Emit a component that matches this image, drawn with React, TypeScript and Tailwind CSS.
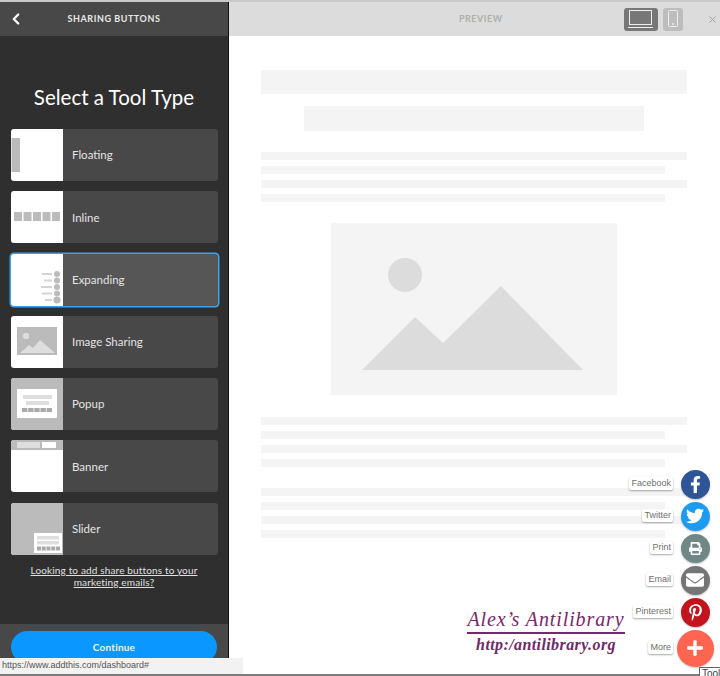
import { ChevronLeft, X } from 'lucide-react';
import { FaEnvelope, FaFacebookF, FaPinterestP, FaPlus, FaPrint, FaTwitter } from 'react-icons/fa';
import type { ReactNode } from 'react';

const GRAY = '#bbbbbb';
const LIGHT = '#dedede';

function Dashes({ x, y, w, h }: { x: number; y: number; w: number; h: number }) {
  const gap = 0.8;
  const size = (w - gap * 4) / 5;
  return (
    <>
      {[0, 1, 2, 3, 4].map((i) => (
        <rect key={i} x={x + i * (size + gap)} y={y} width={size} height={h} fill="#a9a9a9" />
      ))}
    </>
  );
}

const thumbs: Record<string, ReactNode> = {
  Floating: <rect x="0.5" y="9" width="8.5" height="34" fill={GRAY} />,
  Inline: (
    <>
      {[3, 12.5, 22, 31.5, 41].map((x) => (
        <rect key={x} x={x} y="21" width="8" height="9" fill={GRAY} />
      ))}
    </>
  ),
  Expanding: (
    <>
      {[20, 26.5, 33, 39.5].map((y, i) => (
        <g key={y}>
          <rect x={[31, 33, 30, 31][i]} y={y - 1} width={[10, 8, 11, 10][i]} height="2" fill="#d4d4d4" />
          <circle cx="46" cy={y} r="3" fill={GRAY} />
        </g>
      ))}
      <rect x="34" y="45" width="7" height="2" fill="#d4d4d4" />
      <circle cx="46" cy="46" r="3.6" fill={GRAY} />
    </>
  ),
  'Image Sharing': (
    <>
      <rect x="6" y="11" width="40" height="28" fill={GRAY} />
      <circle cx="15" cy="20" r="3.2" fill={LIGHT} />
      <path d="M9 37 L18 29 L22 32 L29 24 L44 37 Z" fill={LIGHT} />
    </>
  ),
  Popup: (
    <>
      <rect width="52" height="52" fill={GRAY} />
      <rect x="6" y="11" width="40" height="29" fill="#ffffff" />
      <rect x="12" y="17" width="29" height="4" fill={LIGHT} />
      <rect x="15" y="23" width="23" height="4" fill={LIGHT} />
      <Dashes x={11} y={30} w={30} h={4} />
    </>
  ),
  Banner: (
    <>
      <rect width="52" height="10" fill={GRAY} />
      <rect x="6" y="2" width="23" height="6" fill={LIGHT} />
      <rect x="31" y="2" width="14" height="6" fill="#ffffff" />
    </>
  ),
  Slider: (
    <>
      <rect width="52" height="52" fill={GRAY} />
      <rect x="23" y="30" width="28" height="20" fill="#ffffff" />
      <rect x="26" y="33" width="22" height="3.5" fill={LIGHT} />
      <rect x="26" y="38" width="22" height="3.5" fill={LIGHT} />
      <Dashes x={26} y={43.5} w={23} h={4} />
    </>
  ),
};

function ToolCard({ name, active = false }: { name: string; active?: boolean }) {
  return (
    <div
      className={`flex h-[52px] shrink-0 overflow-hidden rounded-[3px] ${
        active ? 'bg-[#565656] shadow-[0_0_0_1.5px_#3ba4f0]' : 'bg-[#484848]'
      }`}
    >
      <svg width="52" height="52" viewBox="0 0 52 52" className="shrink-0 bg-white">
        {thumbs[name]}
      </svg>
      <span className="flex items-center pl-[9px] text-[11.5px] text-[#e4e4e4]">{name}</span>
    </div>
  );
}

function Line({ short = false }: { short?: boolean }) {
  return <div className={`h-2 bg-[#f4f4f4] ${short ? 'w-[404px]' : 'w-full'}`} />;
}

function LineGroup() {
  return (
    <div className="flex flex-col gap-1.5">
      <Line />
      <Line short />
      <Line />
      <Line short />
    </div>
  );
}

function ShareRow({
  label,
  bg,
  icon,
  big = false,
}: {
  label: string;
  bg: string;
  icon: ReactNode;
  big?: boolean;
}) {
  return (
    <div className={`flex items-center justify-end ${big ? 'h-10' : 'h-8'}`}>
      <span className="mb-px rounded-[2px] bg-white px-[2px] font-['Liberation_Sans',sans-serif] text-[9px] leading-[13px] text-[#707070] shadow-[0_1px_2px_rgba(0,0,0,0.35)]">
        {label}
      </span>
      <div className="flex w-[44px] justify-center">
        <div
          style={{ backgroundColor: bg }}
          className={`flex items-center justify-center rounded-full text-white shadow-[0_1px_2px_rgba(0,0,0,0.25)] ${
            big ? 'size-[37px]' : 'size-[29px]'
          }`}
        >
          {icon}
        </div>
      </div>
    </div>
  );
}

export default function App() {
  return (
    <div className="relative flex h-[676px] w-[720px] flex-col overflow-hidden border-t-2 border-[#c9c9c9] bg-white font-['Lato',sans-serif]">
      <div className="flex min-h-0 flex-1">
        <aside className="flex w-[229px] shrink-0 flex-col border-r border-[#111] bg-[#2f2f2f]">
          <header className="relative flex h-[34px] shrink-0 items-center justify-center bg-[#484848]">
            <ChevronLeft className="absolute left-[7px] top-[8px] text-white" size={18} strokeWidth={3} />
            <span className="text-[9px] font-bold tracking-[0.55px] text-[#e8e8e8]">SHARING BUTTONS</span>
          </header>
          <h1 className="mt-[47px] text-center text-[20.5px] leading-7 text-white">Select a Tool Type</h1>
          <div className="mt-[18px] flex flex-col gap-[10.25px] pl-[11px] pr-[10px]">
            <ToolCard name="Floating" />
            <ToolCard name="Inline" />
            <ToolCard name="Expanding" active />
            <ToolCard name="Image Sharing" />
            <ToolCard name="Popup" />
            <ToolCard name="Banner" />
            <ToolCard name="Slider" />
          </div>
          <a className="mx-auto mt-[9px] w-[200px] text-center text-[10px] leading-3 tracking-[0.15px] text-[#e0e0e0] underline">
            Looking to add share buttons to your marketing emails?
          </a>
          <div className="mt-auto h-[52px] bg-[#484848] px-[11px] pt-[7px]">
            <button className="h-8 w-full rounded-2xl bg-[#0a97ff] text-[10px] font-bold tracking-[0.2px] text-[#e8f4ff]">
              Continue
            </button>
          </div>
        </aside>
        <main className="min-w-0 flex-1">
          <div className="flex h-[34px] items-center bg-[#dcdcdc]">
            <span className="ml-[230px] w-[42px] whitespace-nowrap text-[9px] font-bold tracking-[0.5px] text-[#aeaeae]">
              PREVIEW
            </span>
            <div className="ml-[123px] flex h-[23px] w-[34px] items-center justify-center rounded-[3px] bg-[#777]">
              <svg width="26" height="20" viewBox="0 0 26 20" fill="none" stroke="#eeeeee">
                <rect x="1.5" y="1.5" width="22" height="14" />
                <path d="M0 18.5 H25" />
              </svg>
            </div>
            <div className="ml-[5px] flex h-[23px] w-[20px] items-center justify-center rounded-[3px] bg-[#bdbdbd]">
              <svg width="12" height="18" viewBox="0 0 12 18" fill="none" stroke="#eeeeee">
                <rect x="1.5" y="0.5" width="9" height="16" rx="1" />
                <circle cx="6" cy="14" r="0.6" fill="#eeeeee" />
              </svg>
            </div>
            <X className="ml-[24px] text-[#999]" size={11} strokeWidth={2} />
          </div>
          <div className="pl-8 pr-[33px] pt-[34px]">
            <div className="h-6 bg-[#f4f4f4]" />
            <div className="mx-auto mt-3 h-[25px] w-[340px] bg-[#f4f4f4]" />
            <div className="mt-[21px]">
              <LineGroup />
            </div>
            <svg width="286" height="172" viewBox="0 0 286 172" className="mx-auto mt-[21px] bg-[#f4f4f4]">
              <circle cx="74" cy="52" r="17" fill="#dcdcdc" />
              <path d="M31 147 L84 94 L112 120 L170 63 L252 147 Z" fill="#dcdcdc" />
            </svg>
            <div className="mt-[22px]">
              <LineGroup />
            </div>
            <div className="mt-[21px]">
              <LineGroup />
            </div>
          </div>
        </main>
      </div>

      <div className="absolute left-[467px] top-[605px] w-[158px] whitespace-nowrap text-center font-['Liberation_Serif',serif] italic text-[#77286c]">
        <div className="border-b-2 border-[#77286c] text-[20px] leading-[25px] tracking-[0.9px]">
          Alex’s Antilibrary
        </div>
        <div className="mt-[1px] text-[16px] font-bold leading-5 tracking-[0.4px] text-[#6e2a66]">http:/antilibrary.org</div>
      </div>

      <div className="absolute right-[3px] top-[466px] flex flex-col">
        <ShareRow label="Facebook" bg="#2f5597" icon={<FaFacebookF size={17} />} />
        <ShareRow label="Twitter" bg="#1d9bf0" icon={<FaTwitter size={18} />} />
        <ShareRow label="Print" bg="#6f8785" icon={<FaPrint size={13} />} />
        <ShareRow label="Email" bg="#757575" icon={<FaEnvelope size={18} />} />
        <ShareRow label="Pinterest" bg="#c1141c" icon={<FaPinterestP size={17} />} />
        <ShareRow label="More" bg="#ff6550" icon={<FaPlus size={18} />} big />
      </div>

      <div className="absolute bottom-[2px] left-0 h-4 w-[243px] bg-[#f2f2f2] pl-[2px] font-['Liberation_Sans',sans-serif] text-[9px] leading-[14px] text-[#555]">
        https://www.addthis.com/dashboard#
      </div>
      <div className="absolute bottom-0 left-0 h-[2px] w-full bg-[#7d7d7d]" />
      <div className="absolute bottom-0 right-0 h-[9px] w-[21px] overflow-hidden border-l border-t border-[#666] bg-white pl-[2px] font-['Liberation_Sans',sans-serif] text-[10px] leading-[11px] text-[#444]">
        Tool
      </div>
    </div>
  );
}
